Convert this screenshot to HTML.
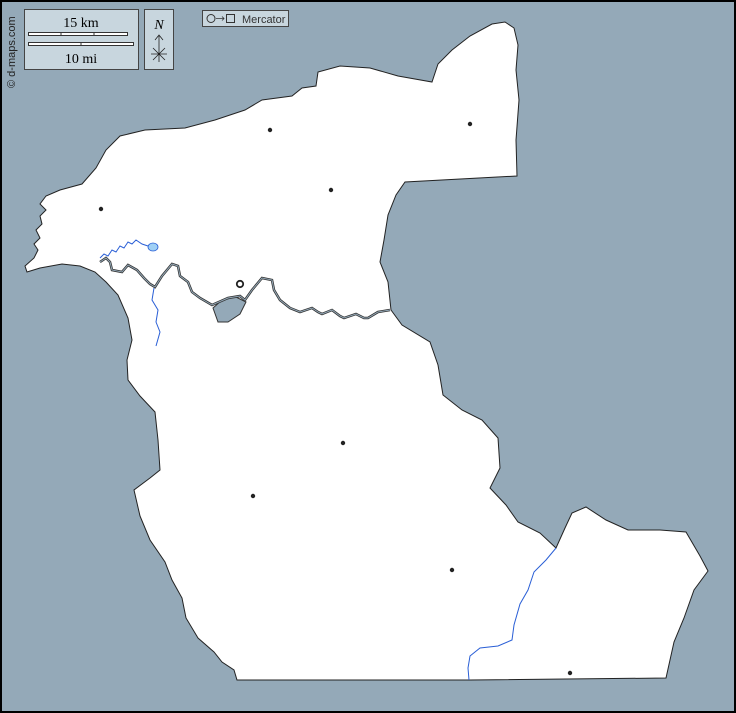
<!DOCTYPE html>
<html><head><meta charset="utf-8"><style>
html,body{margin:0;padding:0}
body{width:736px;height:713px;overflow:hidden;background:#94a9b8;position:relative;font-family:"Liberation Serif",serif}
</style></head><body>
<svg width="736" height="713" style="position:absolute;left:0;top:0">
<rect x="0" y="0" width="736" height="713" fill="#94a9b8"/>
<path fill="#fff" stroke="#222" stroke-width="1" d="M492,24 L505,22 L514,28 L518,45 L516,70 L519,100 L516,140 L517,176 L405,182 L396,195 L388,215 L384,240 L380,262 L388,282 L391,310 L402,325 L430,342 L438,365 L443,395 L462,410 L482,420 L498,438 L500,468 L490,488 L506,505 L518,522 L540,533 L556,548 L565,528 L572,513 L586,507 L606,520 L628,530 L660,530 L686,532 L700,556 L708,571 L694,590 L684,618 L674,642 L666,678 L470,680 L237,680 L234,670 L222,662 L214,652 L198,638 L186,618 L182,598 L172,580 L165,562 L150,540 L140,516 L134,490 L150,478 L160,470 L158,440 L155,412 L140,396 L128,380 L127,360 L132,340 L128,318 L118,295 L106,282 L95,272 L80,266 L62,264 L40,268 L27,272 L25,266 L34,258 L38,250 L34,244 L40,238 L36,230 L42,224 L40,216 L46,210 L40,204 L46,196 L60,190 L82,184 L96,168 L106,150 L120,136 L145,130 L185,128 L215,120 L245,110 L262,100 L292,96 L302,88 L316,86 L318,72 L340,66 L370,68 L398,76 L432,82 L438,64 L452,50 L470,36 Z"/>
<path fill="#94a9b8" stroke="#333" stroke-width="1" d="M213,308 L222,300 L236,297 L246,302 L240,314 L228,322 L218,322 Z"/>
<path id="rv" fill="none" stroke="#333" stroke-width="2.5" d="M100,262 L106,258 L110,262 L112,270 L122,272 L128,265 L137,270 L144,278 L150,284 L155,287 L162,276 L172,264 L178,266 L180,276 L188,282 L192,292 L200,298 L212,305 L228,298 L240,296 L245,300 L252,290 L262,278 L272,280 L274,290 L280,300 L290,308 L300,312 L312,308 L318,312 L322,314 L332,310 L340,316 L344,318 L356,314 L364,318 L368,318 L378,312 L390,310"/>
<path fill="none" stroke="#94a9b8" stroke-width="1" d="M100,262 L106,258 L110,262 L112,270 L122,272 L128,265 L137,270 L144,278 L150,284 L155,287 L162,276 L172,264 L178,266 L180,276 L188,282 L192,292 L200,298 L212,305 L228,298 L240,296 L245,300 L252,290 L262,278 L272,280 L274,290 L280,300 L290,308 L300,312 L312,308 L318,312 L322,314 L332,310 L340,316 L344,318 L356,314 L364,318 L368,318 L378,312 L390,310"/>
<path fill="none" stroke="#2a5fd6" stroke-width="1" d="M100,258 L104,254 L108,256 L112,250 L116,252 L120,246 L124,248 L128,242 L132,244 L136,240 L142,244 L148,246 M154,288 L152,300 L158,310 L156,322 L160,332 L156,346"/>
<ellipse cx="153" cy="247" rx="5" ry="4" fill="#9fd0f5" stroke="#2a5fd6" stroke-width="0.8"/>
<path fill="none" stroke="#2a5fd6" stroke-width="1" d="M556,548 L546,560 L534,572 L528,590 L520,604 L514,625 L512,640 L498,646 L480,648 L470,656 L468,668 L469,680"/>
<g fill="#222">
<circle cx="270" cy="130" r="2.2"/><circle cx="470" cy="124" r="2.2"/><circle cx="331" cy="190" r="2.2"/><circle cx="101" cy="209" r="2.2"/>
<circle cx="343" cy="443" r="2.2"/><circle cx="253" cy="496" r="2.2"/><circle cx="452" cy="570" r="2.2"/><circle cx="570" cy="673" r="2.2"/>
</g>
<circle cx="240" cy="284" r="3.2" fill="none" stroke="#222" stroke-width="1.8"/>
<rect x="24.5" y="9.5" width="114" height="60" fill="#c8d6de" stroke="#444"/>
<text x="81" y="27" text-anchor="middle" font-size="14" font-family="Liberation Serif">15 km</text>
<rect x="28.5" y="32.5" width="99" height="3" fill="#fff" stroke="#333"/>
<line x1="61" y1="32" x2="61" y2="36" stroke="#333"/><line x1="94" y1="32" x2="94" y2="36" stroke="#333"/>
<rect x="28.5" y="42.5" width="105" height="3" fill="#fff" stroke="#333"/>
<line x1="81" y1="42" x2="81" y2="46" stroke="#333"/>
<text x="81" y="63" text-anchor="middle" font-size="14" font-family="Liberation Serif">10 mi</text>
<rect x="144.5" y="9.5" width="29" height="60" fill="#c8d6de" stroke="#444"/>
<text x="159" y="29" text-anchor="middle" font-size="14" font-style="italic" font-family="Liberation Serif">N</text>
<path d="M159,36 L159,62 M155,40 L159,35 L163,40 M151,54 L167,54 M153,48 L165,60 M165,48 L153,60" stroke="#222" stroke-width="0.8" fill="none"/>
<rect x="202.5" y="10.5" width="86" height="16" fill="#c8d6de" stroke="#444"/>
<circle cx="211" cy="18.5" r="4" fill="none" stroke="#333"/>
<path d="M216,18.5 L224,18.5 M222,16.5 L224,18.5 L222,20.5" stroke="#333" fill="none" stroke-width="0.8"/>
<rect x="226.5" y="14.5" width="8" height="8" fill="none" stroke="#333"/>
<text x="242" y="23" font-size="11" font-family="Liberation Sans" fill="#333">Mercator</text>
<text transform="translate(15,88) rotate(-90)" font-size="11" font-family="Liberation Sans" fill="#222">© d-maps.com</text>
<rect x="1" y="1" width="734" height="711" fill="none" stroke="#000" stroke-width="2"/>
</svg>
</body></html>
